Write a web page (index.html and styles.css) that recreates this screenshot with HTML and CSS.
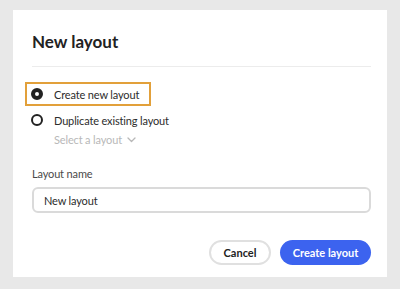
FILE: index.html
```html
<!DOCTYPE html>
<html lang="en">
<head>
  <meta charset="UTF-8" />
  <title>New layout</title>
  <link rel="stylesheet" href="styles.css">
</head>
<body>
  <div class="dialog">
    <h2 class="dialog-title">New layout</h2>
    <hr class="divider">

    <div class="options">
      <label class="radio-row highlighted">
        <span class="radio checked"></span>
        <span>Create new layout</span>
      </label>
      <label class="radio-row">
        <span class="radio"></span>
        <span>Duplicate existing layout</span>
      </label>
      <div class="select-picker">
        Select a layout
        <svg width="9" height="6" viewBox="0 0 9 6"><path d="M1 1 L4.5 4.5 L8 1" fill="none" stroke="#b8b8b8" stroke-width="1.3" stroke-linecap="round" stroke-linejoin="round"/></svg>
      </div>
    </div>

    <div class="field">
      <div class="field-label">Layout name</div>
      <div class="text-input">New layout</div>
    </div>

    <div class="dialog-actions">
      <button class="btn secondary">Cancel</button>
      <button class="btn primary">Create layout</button>
    </div>
  </div>
</body>
</html>
```

FILE: styles.css
```css
body {
  margin: 0;
  padding: 10px 13px 12px;
  background-color: #e8e8e8;
  font-family: Lato, 'Open Sans', sans-serif;
  color: #2c2c2c;
}

.dialog {
  background: #fff;
  height: 267px;
  box-sizing: border-box;
  padding: 20px 16px 0 19px;
}

.dialog-title {
  margin: 0;
  font-size: 17px;
  font-weight: 700;
  line-height: 24px;
  color: #222;
}

.divider {
  border: none;
  border-top: 1px solid #ececec;
  margin: 12px 0 0;
}

.options {
  margin-top: 15px;
  display: flex;
  flex-direction: column;
  align-items: flex-start;
  gap: 2px;
}

.radio-row {
  display: flex;
  align-items: center;
  gap: 11px;
  font-size: 11px;
  letter-spacing: -0.15px;
  height: 24px;
  box-sizing: border-box;
  padding: 0 10px 0 4px;
  margin-left: -7px;
  border: 2px solid transparent;
}

.radio-row.highlighted {
  border-color: #e2a03a;
}

.radio {
  width: 12px;
  height: 12px;
  box-sizing: border-box;
  border: 2px solid #222;
  border-radius: 50%;
}

.radio.checked {
  border: 4px solid #222;
  background: #fff;
}

.select-picker {
  margin-left: 22px;
  margin-top: -1px;
  font-size: 11px;
  letter-spacing: -0.15px;
  line-height: 14px;
  color: #b8b8b8;
  display: flex;
  align-items: center;
  gap: 5px;
}

.field {
  margin-top: 20px;
}

.field-label {
  font-size: 11px;
  letter-spacing: -0.15px;
  line-height: 14px;
  color: #4a4a4a;
  margin-bottom: 6px;
}

.text-input {
  height: 26px;
  box-sizing: border-box;
  border: 2px solid #dadada;
  border-radius: 6px;
  padding: 0 10px;
  font-size: 11px;
  letter-spacing: -0.15px;
  display: flex;
  align-items: center;
}

.dialog-actions {
  margin-top: 27px;
  display: flex;
  justify-content: flex-end;
  gap: 9px;
}

.btn {
  height: 25px;
  border-radius: 13px;
  font-family: Lato, 'Open Sans', sans-serif;
  font-size: 11px;
  font-weight: 700;
  padding: 0;
  white-space: nowrap;
}

.btn.secondary {
  background: #fff;
  border: 2px solid #e0e0e0;
  color: #222;
  width: 62px;
}

.btn.primary {
  background: #3c63ef;
  border: none;
  color: #fff;
  width: 91px;
}
```
